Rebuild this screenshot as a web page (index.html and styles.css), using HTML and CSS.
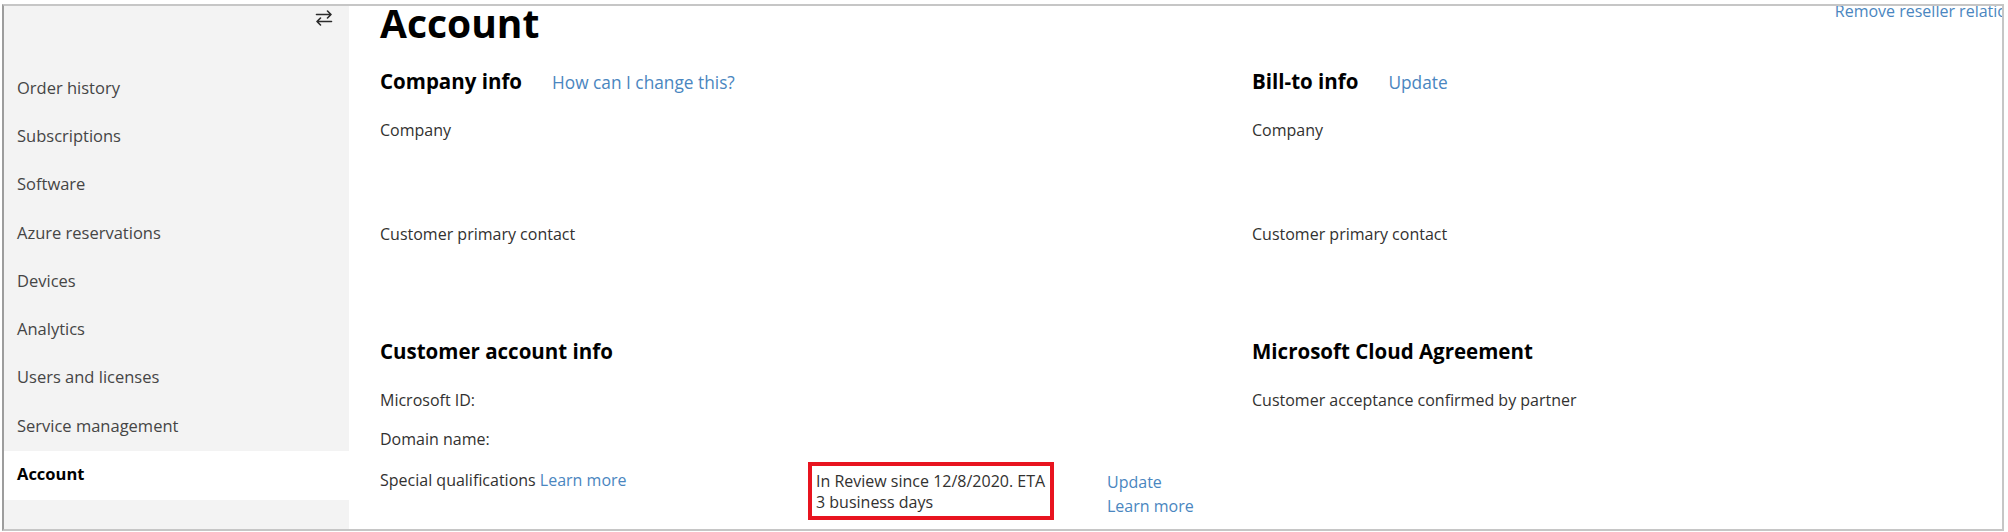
FILE: index.html
```html
<!DOCTYPE html>
<html lang="en">
<head>
<meta charset="utf-8">
<title>Account</title>
<link rel="stylesheet" href="styles.css">
</head>
<body>
<div class="frame">
  <nav class="sidebar">
    <div class="side-top">
      <span class="toggle" aria-label="Collapse navigation">
        <svg width="18" height="16" viewBox="0 0 18 16" fill="none" stroke="#2b2b2b" stroke-width="1.6" stroke-linecap="round" stroke-linejoin="round">
          <path d="M1.5 4.5H16M12.5 1l3.5 3.5-3.5 3.5"/>
          <path d="M16.5 11.5H2M5.5 8L2 11.5 5.5 15"/>
        </svg>
      </span>
    </div>
    <ul class="nav">
      <li class="nav-item">Order history</li>
      <li class="nav-item">Subscriptions</li>
      <li class="nav-item">Software</li>
      <li class="nav-item">Azure reservations</li>
      <li class="nav-item">Devices</li>
      <li class="nav-item">Analytics</li>
      <li class="nav-item">Users and licenses</li>
      <li class="nav-item">Service management</li>
      <li class="nav-item active">Account</li>
    </ul>
  </nav>
  <main class="main">
    <header class="page-head">
      <h1 class="page-title">Account</h1>
      <a class="link remove-link">Remove reseller relationship</a>
    </header>
    <div class="sections">
      <section class="section">
        <div class="sec-head">
          <h2 class="sec-title">Company info</h2>
          <a class="link head-link">How can I change this?</a>
        </div>
        <div class="field first tall">Company</div>
        <div class="field">Customer primary contact</div>
      </section>
      <section class="section">
        <div class="sec-head">
          <h2 class="sec-title">Bill-to info</h2>
          <a class="link head-link">Update</a>
        </div>
        <div class="field first tall">Company</div>
        <div class="field">Customer primary contact</div>
      </section>
      <section class="section">
        <h2 class="sec-title">Customer account info</h2>
        <div class="field first">Microsoft ID:</div>
        <div class="field second">Domain name:</div>
        <div class="qual-row">
          <div class="qual-label">Special qualifications <a class="link">Learn more</a></div>
          <div class="status-box">In Review since 12/8/2020. ETA<br>3 business days</div>
          <div class="actions">
            <a class="link">Update</a>
            <a class="link">Learn more</a>
          </div>
        </div>
      </section>
      <section class="section">
        <h2 class="sec-title">Microsoft Cloud Agreement</h2>
        <div class="field first">Customer acceptance confirmed by partner</div>
      </section>
    </div>
  </main>
</div>
</body>
</html>
```
FILE: styles.css
```css
* {
  box-sizing: border-box;
}

html, body {
  margin: 0;
  padding: 0;
  background: #ffffff;
}

body {
  font-family: "Open Sans", "Noto Sans", "DejaVu Sans", sans-serif;
  font-size: 16px;
  color: #323130;
}

.frame {
  margin: 4px 0 0 2px;
  width: 2002px;
  height: 527px;
  border: 2px solid #c6c6c6;
  border-left-color: #9d9d9d;
  display: flex;
  overflow: hidden;
  background: #ffffff;
}

/* Sidebar */
.sidebar {
  width: 345px;
  flex-shrink: 0;
  background: #f3f3f3;
}

.side-top {
  height: 59px;
  display: flex;
  justify-content: flex-end;
  align-items: flex-start;
  padding: 4px 16px 0 0;
}

.toggle {
  display: block;
  width: 18px;
  height: 16px;
}

.toggle svg {
  display: block;
}

.nav {
  list-style: none;
  margin: 0;
  padding: 0;
}

.nav-item {
  height: 48.3px;
  display: flex;
  align-items: center;
  padding: 0 0 4px 13px;
  font-size: 16.5px;
  color: #454545;
}

.nav-item.active {
  background: #ffffff;
  font-weight: 700;
  color: #000000;
}

/* Main */
.main {
  flex: 1;
  min-width: 0;
  padding-left: 31px;
}

.page-head {
  display: flex;
  justify-content: space-between;
  align-items: flex-start;
}

.page-title {
  margin: 1px 0 0;
  font-size: 39px;
  line-height: 32px;
  font-weight: 700;
  color: #000000;
}

.link {
  color: #4a86c0;
  text-decoration: none;
  cursor: pointer;
}

.remove-link {
  font-size: 16px;
  line-height: 16px;
  margin-top: -3px;
  margin-right: -46px;
  white-space: nowrap;
  flex-shrink: 0;
}

.sections {
  display: grid;
  grid-template-columns: 872px 1fr;
  row-gap: 91px;
  margin-top: 28px;
}

.sec-head {
  display: flex;
  align-items: baseline;
  gap: 30px;
}

.sec-title {
  margin: 0;
  font-size: 20.5px;
  line-height: 28px;
  font-weight: 700;
  color: #000000;
}

.head-link {
  font-size: 17.3px;
}

.field {
  font-size: 16px;
  line-height: 24px;
}

.field.first {
  margin-top: 23px;
}

.field.tall {
  height: 104px;
}

.field.second {
  margin-top: 15px;
}

.qual-row {
  display: flex;
  align-items: flex-start;
  margin-top: 17px;
  line-height: 24px;
}

.qual-label {
  width: 428px;
  flex-shrink: 0;
}

.status-box {
  width: 246px;
  flex-shrink: 0;
  margin-top: -6px;
  border: 4px solid #e8141f;
  padding: 5px 4px 3px;
  line-height: 21px;
  white-space: nowrap;
}

.actions {
  display: flex;
  flex-direction: column;
  margin-left: 53px;
  margin-top: 2px;
  line-height: 24px;
}
```
